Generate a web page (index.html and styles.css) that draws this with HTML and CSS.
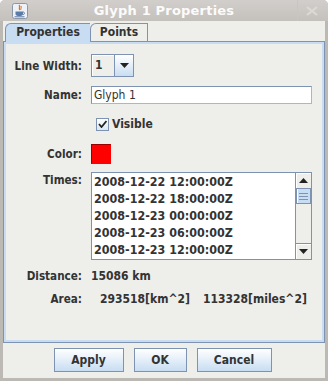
FILE: index.html
```html
<!DOCTYPE html>
<html>
<head>
    <title>Glyph 1 Properties</title>
    <link rel="stylesheet" href="styles.css">
</head>
<body>
    <div class="window">
        <div class="titlebar">
            <span class="app-icon">
                <svg width="16" height="16" viewBox="0 0 16 16">
                    <rect x="0.5" y="0.5" width="15" height="15" rx="2" fill="#eef2f7" stroke="#8b96a6"/>
                    <path d="M7 2 C9 4 6 5 8 7" stroke="#e0701c" stroke-width="1.3" fill="none"/>
                    <path d="M9 3 C10 5 8 6 9 7" stroke="#e0701c" stroke-width="1" fill="none"/>
                    <path d="M3.5 8.5 H11 V11 C11 12.5 9.5 13 7.3 13 C5 13 3.5 12.5 3.5 11 Z" fill="#5a7aa8"/>
                    <path d="M11 9 C13 9 13 11.5 11 11.5" stroke="#5a7aa8" stroke-width="1" fill="none"/>
                    <path d="M2.5 13.8 H12.5" stroke="#5a7aa8" stroke-width="1"/>
                </svg>
            </span>
            <span class="title">Glyph 1 Properties</span>
            <span class="close">
                <svg width="12" height="10" viewBox="0 0 12 10">
                    <path d="M1 1 L11 9 M11 1 L1 9" stroke="#dcd9d5" stroke-width="2.2"/>
                </svg>
            </span>
        </div>

        <div class="client">
            <div class="tabs">
                <div class="tab selected">Properties</div>
                <div class="tab">Points</div>
            </div>

            <div class="panel">
                <div class="row row-width">
                    <span class="label">Line Width:</span>
                    <div class="combo">
                        <span class="combo-value">1</span>
                        <span class="combo-arrow">
                            <svg width="9" height="5" viewBox="0 0 9 5"><path d="M0 0 H9 L4.5 5 Z" fill="#222"/></svg>
                        </span>
                    </div>
                </div>

                <div class="row row-name">
                    <span class="label">Name:</span>
                    <input class="textfield" type="text" value="Glyph 1">
                </div>

                <div class="row row-visible">
                    <span class="label"></span>
                    <span class="checkbox">
                        <svg width="9" height="8" viewBox="0 0 9 8"><path d="M1 4 L3.5 7 L8.5 1" stroke="#222" stroke-width="1.8" fill="none"/></svg>
                    </span>
                    <span class="check-label">Visible</span>
                </div>

                <div class="row row-color">
                    <span class="label">Color:</span>
                    <span class="swatch"></span>
                </div>

                <div class="row row-times">
                    <span class="label">Times:</span>
                    <div class="list">
                        <div class="items">
                            <div>2008-12-22 12:00:00Z</div>
                            <div>2008-12-22 18:00:00Z</div>
                            <div>2008-12-23 00:00:00Z</div>
                            <div>2008-12-23 06:00:00Z</div>
                            <div>2008-12-23 12:00:00Z</div>
                        </div>
                        <div class="scrollbar">
                            <span class="sb-btn">
                                <svg width="9" height="5" viewBox="0 0 9 5"><path d="M0 5 H9 L4.5 0 Z" fill="#222"/></svg>
                            </span>
                            <div class="sb-track">
                                <span class="sb-thumb"><i></i><i></i><i></i></span>
                            </div>
                            <span class="sb-btn">
                                <svg width="9" height="5" viewBox="0 0 9 5"><path d="M0 0 H9 L4.5 5 Z" fill="#222"/></svg>
                            </span>
                        </div>
                    </div>
                </div>

                <div class="row row-distance">
                    <span class="label">Distance:</span>
                    <span class="value">15086 km</span>
                </div>

                <div class="row row-area">
                    <span class="label">Area:</span>
                    <span class="value area-km">293518[km^2]</span>
                    <span class="value area-mi">113328[miles^2]</span>
                </div>
            </div>

            <div class="buttons">
                <button class="btn btn-apply">Apply</button>
                <button class="btn btn-ok">OK</button>
                <button class="btn btn-cancel">Cancel</button>
            </div>
        </div>
    </div>
</body>
</html>
```

FILE: styles.css
```css
body {
    margin: 0;
    font-family: "DejaVu Sans Condensed", "DejaVu Sans", sans-serif;
    font-stretch: condensed;
    font-size: 11.6px;
    font-weight: bold;
    color: #333333;
}
.window {
    width: 328px;
    height: 381px;
    background-color: #bcb8b4;
    border-radius: 5px 5px 0 0;
    overflow: hidden;
}
.titlebar {
    height: 21px;
    display: grid;
    grid-template-columns: 1fr auto 1fr;
    align-items: center;
    background: linear-gradient(#d2cecb, #c4c0bc);
}
.app-icon {
    margin-left: 12px;
    height: 16px;
}
.title {
    color: #fbfbfa;
    font-size: 13px;
    font-stretch: normal;
    font-family: "DejaVu Sans", sans-serif;
    letter-spacing: 0.2px;
}
.close {
    justify-self: end;
    width: 31px;
    height: 21px;
    display: flex;
    align-items: center;
    justify-content: center;
    border-left: 1px solid #c9c5c1;
    padding-right: 3px;
    box-sizing: border-box;
}
.client {
    margin: 0 3px;
    height: 357px;
    background-color: #eeeeea;
    padding-top: 2px;
    box-sizing: border-box;
}
.tabs {
    display: flex;
    height: 18px;
    padding-left: 2px;
}
.tab {
    height: 18px;
    box-sizing: border-box;
    border: 1px solid #7e92b2;
    border-bottom: none;
    border-top-left-radius: 6px;
    padding-top: 1px;
    text-align: center;
    font-size: 12px;
    background-color: #eeeeea;
}
.tab.selected {
    width: 85px;
    height: 19px;
    margin-bottom: -1px;
    background-color: #c8ddf2;
    position: relative;
    border-right: none;
}
.tab:not(.selected) {
    width: 58px;
}
.panel {
    height: 302px;
    box-sizing: border-box;
    border: 1px solid #7e92b2;
    box-shadow: inset 0 0 0 2px #c8ddf2;
    padding-top: 12px;
}
.row {
    display: flex;
    align-items: center;
}
.label {
    width: 78px;
    margin-right: 9px;
    text-align: right;
    flex-shrink: 0;
}
.row-width { height: 23px; }
.row-name { height: 18px; margin-top: 9px; }
.row-visible { height: 14px; margin-top: 13px; }
.row-color { height: 20px; margin-top: 13px; }
.row-times { height: 88px; margin-top: 8px; align-items: flex-start; }
.row-times .label { line-height: 17px; }
.row-distance { height: 16px; margin-top: 8px; }
.row-area { height: 16px; margin-top: 7px; }

.combo {
    width: 43px;
    height: 23px;
    box-sizing: border-box;
    border: 1px solid #7e92b2;
    display: flex;
}
.combo-value {
    width: 23px;
    box-sizing: border-box;
    border-right: 1px solid #7e92b2;
    background-color: #eeeeea;
    box-shadow: inset 1px 1px 0 #ffffff;
    padding-left: 3px;
    line-height: 21px;
    font-size: 12px;
}
.combo-arrow {
    flex: 1;
    display: flex;
    align-items: center;
    justify-content: center;
    background: linear-gradient(#ffffff, #c8ddf2);
}
.textfield {
    width: 221px;
    height: 18px;
    box-sizing: border-box;
    border: 1px solid #7e92b2;
    border-right-color: #a9b7cb;
    border-bottom-color: #a9b7cb;
    margin: 0;
    padding: 0 2px;
    font-family: "DejaVu Sans Condensed", "DejaVu Sans", sans-serif;
    font-stretch: condensed;
    font-size: 12px;
    font-weight: normal;
    color: #333333;
    background-color: #ffffff;
    outline: none;
}
.checkbox {
    width: 13px;
    height: 13px;
    box-sizing: border-box;
    margin-left: 5px;
    border: 1px solid #7e92b2;
    background: linear-gradient(#ffffff, #d8e6f4);
    display: flex;
    align-items: center;
    justify-content: center;
}
.check-label {
    margin-left: 3px;
    font-size: 12px;
}
.swatch {
    width: 20px;
    height: 20px;
    box-sizing: border-box;
    background-color: #ff0000;
    border: 1px solid #990000;
    border-right-color: #ff0000;
    border-bottom-color: #ff0000;
}
.list {
    width: 221px;
    height: 88px;
    box-sizing: border-box;
    border: 1px solid #7e92b2;
    background-color: #ffffff;
    display: flex;
}
.items {
    flex: 1;
    padding-left: 2px;
    font-size: 12.4px;
    line-height: 17px;
    overflow: hidden;
    white-space: nowrap;
}
.scrollbar {
    width: 16px;
    display: flex;
    flex-direction: column;
    background-color: #eeeeea;
    border-left: 1px solid #7e92b2;
    box-sizing: border-box;
}
.sb-btn {
    height: 15px;
    display: flex;
    align-items: center;
    justify-content: center;
    background-color: #eeeeea;
    border-bottom: 1px solid #7e92b2;
    box-shadow: inset 1px 1px 0 #ffffff;
}
.sb-btn:last-child {
    border-bottom: none;
    border-top: 1px solid #7e92b2;
}
.sb-track {
    flex: 1;
}
.sb-thumb {
    display: flex;
    flex-direction: column;
    justify-content: center;
    gap: 2px;
    height: 15px;
    box-sizing: border-box;
    border: 1px solid #7e92b2;
    border-top: none;
    background-color: #c8ddf2;
    box-shadow: inset 1px 0 0 #ffffff;
    padding: 0 2px;
}
.sb-thumb i {
    display: block;
    height: 1px;
    background-color: #7e92b2;
}
.value {
    font-size: 12px;
}
.area-km {
    margin-left: 9px;
}
.area-mi {
    margin-left: 13px;
}
.buttons {
    display: flex;
    justify-content: center;
    gap: 10px;
    margin-top: 5px;
    margin-left: -3px;
}
.btn {
    height: 24px;
    box-sizing: border-box;
    border: 1px solid #7e92b2;
    background: linear-gradient(#ffffff, #c8ddf2);
    font-family: "DejaVu Sans Condensed", "DejaVu Sans", sans-serif;
    font-stretch: condensed;
    font-size: 12px;
    font-weight: bold;
    color: #333333;
    padding: 0;
}
.btn-apply { width: 70px; }
.btn-ok { width: 53px; }
.btn-cancel { width: 75px; }
```
